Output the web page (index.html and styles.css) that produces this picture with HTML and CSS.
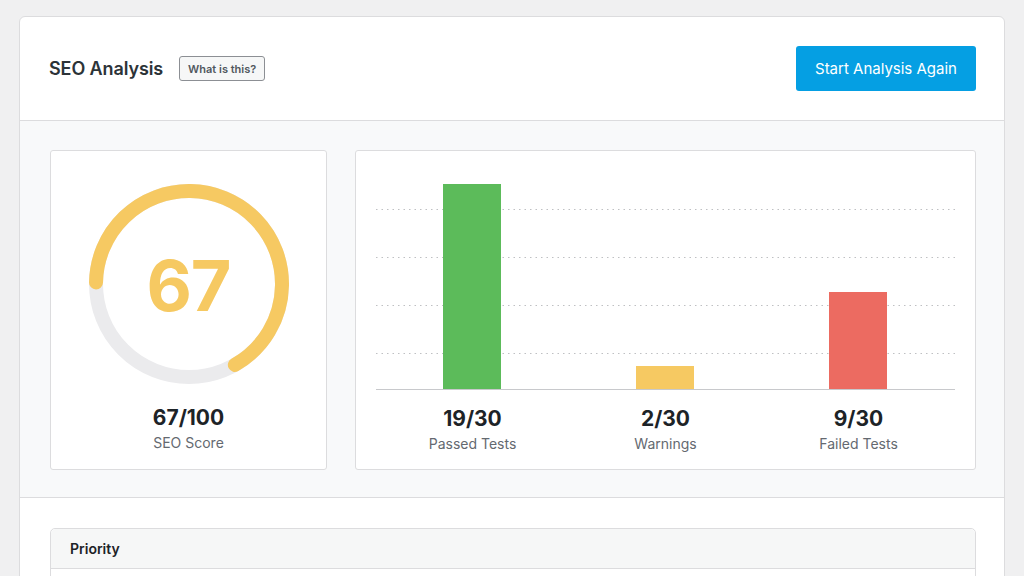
FILE: index.html
```html
<!DOCTYPE html>
<html lang="en">
<head>
<meta charset="utf-8">
<title>SEO Analysis</title>
<link rel="stylesheet" href="styles.css">
</head>
<body>
<div class="card">
  <div class="card-header">
    <div class="title-group">
      <h1 class="title">SEO Analysis</h1>
      <button class="help-btn">What is this?</button>
    </div>
    <button class="primary-btn">Start Analysis Again</button>
  </div>
  <div class="summary">
    <div class="panel score-panel">
      <div class="gauge">
        <svg class="gauge-svg" width="200" height="200" viewBox="0 0 200 200">
          <circle cx="100" cy="100" r="93" fill="none" stroke="#ebebed" stroke-width="14"/>
          <circle cx="100" cy="100" r="93" fill="none" stroke="#f6c962" stroke-width="14" stroke-linecap="round" stroke-dasharray="388 600" transform="rotate(181 100 100)"/>
        </svg>
        <div class="gauge-value">67</div>
      </div>
      <div class="stat-value">67/100</div>
      <div class="stat-label">SEO Score</div>
    </div>
    <div class="panel chart-panel">
      <svg class="chart-svg" width="579" height="220" viewBox="0 0 579 220">
        <g stroke="#bfc0c3" stroke-width="1" stroke-dasharray="1.5 4">
          <line x1="0" y1="39.5" x2="579" y2="39.5"/>
          <line x1="0" y1="87.5" x2="579" y2="87.5"/>
          <line x1="0" y1="135.5" x2="579" y2="135.5"/>
          <line x1="0" y1="183.5" x2="579" y2="183.5"/>
        </g>
        <rect x="67" y="14" width="58" height="205" fill="#5cbb5a"/>
        <rect x="260" y="196" width="58" height="23" fill="#f6c962"/>
        <rect x="453" y="122" width="58" height="97" fill="#ec6b61"/>
        <line x1="0" y1="219.5" x2="579" y2="219.5" stroke="#c8c9cc" stroke-width="1"/>
      </svg>
      <div class="chart-labels">
        <div class="chart-col">
          <div class="stat-value">19/30</div>
          <div class="stat-label">Passed Tests</div>
        </div>
        <div class="chart-col">
          <div class="stat-value">2/30</div>
          <div class="stat-label">Warnings</div>
        </div>
        <div class="chart-col">
          <div class="stat-value">9/30</div>
          <div class="stat-label">Failed Tests</div>
        </div>
      </div>
    </div>
  </div>
  <div class="details">
    <div class="table">
      <div class="table-head">Priority</div>
      <div class="table-body"></div>
    </div>
  </div>
</div>
</body>
</html>
```
FILE: styles.css
```css
* { box-sizing: border-box; }
html, body { margin: 0; height: 100%; overflow: hidden; }
body {
  background: #f0f0f1;
  padding: 16px 19px 0 19px;
  font-family: "Inter", "Roboto", "Liberation Sans", sans-serif;
  color: #1d2327;
}
.card {
  background: #fff;
  border: 1px solid #dcdcde;
  border-radius: 6px;
  height: 700px;
  overflow: hidden;
}
.card-header {
  height: 104px;
  padding: 0 28px 0 29px;
  display: flex;
  align-items: center;
  justify-content: space-between;
  border-bottom: 1px solid #dcdcde;
}
.title-group { display: flex; align-items: center; }
.title {
  margin: 0;
  font-size: 18px;
  font-weight: 600;
  color: #2c3338;
  letter-spacing: -0.1px;
}
.help-btn {
  margin-left: 16px;
  height: 25px;
  width: 86px;
  padding: 0;
  border: 1px solid #8c8f94;
  border-radius: 3px;
  background: #f6f7f7;
  font-family: inherit;
  font-size: 11px;
  font-weight: 600;
  color: #50575e;
}
.primary-btn {
  width: 180px;
  height: 45px;
  border: 0;
  border-radius: 3px;
  background: #059fe3;
  color: #fff;
  font-family: inherit;
  font-size: 15px;
  font-weight: 400;
  padding: 0;
}
.summary {
  background: #f8f9fa;
  border-bottom: 1px solid #dcdcde;
  padding: 29px 28px 27px 30px;
  display: flex;
  gap: 28px;
}
.panel {
  background: #fff;
  border: 1px solid #dcdcde;
  border-radius: 3px;
  height: 320px;
  display: flex;
  flex-direction: column;
  align-items: center;
}
.score-panel { width: 277px; padding-top: 33px; }
.chart-panel { flex: 1; padding: 19px 20px 0 20px; }
.gauge { display: grid; width: 200px; height: 200px; }
.gauge-svg, .gauge-value { grid-area: 1 / 1; }
.gauge-value {
  align-self: center;
  justify-self: center;
  font-size: 70px;
  font-weight: 700;
  color: #f6c962;
  line-height: 1;
  letter-spacing: -1px;
  margin-top: 4px;
}
.stat-value {
  font-size: 21px;
  font-weight: 700;
  line-height: 26px;
  color: #1d2327;
}
.score-panel .stat-value { margin-top: 21px; }
.stat-label {
  font-size: 14px;
  line-height: 18px;
  color: #646970;
  margin-top: 3px;
}
.chart-svg { display: block; }
.chart-labels {
  width: 579px;
  display: grid;
  grid-template-columns: repeat(3, 1fr);
  margin-top: 16px;
}
.chart-col { display: flex; flex-direction: column; align-items: center; }
.details { padding: 30px 28px 0 30px; }
.table {
  border: 1px solid #dcdcde;
  border-radius: 5px 5px 0 0;
  height: 120px;
}
.table-head {
  height: 40px;
  background: #f6f7f7;
  border-bottom: 1px solid #dcdcde;
  border-radius: 5px 5px 0 0;
  padding: 0 19px;
  display: flex;
  align-items: center;
  font-size: 14px;
  font-weight: 600;
  color: #1d2327;
}
```
